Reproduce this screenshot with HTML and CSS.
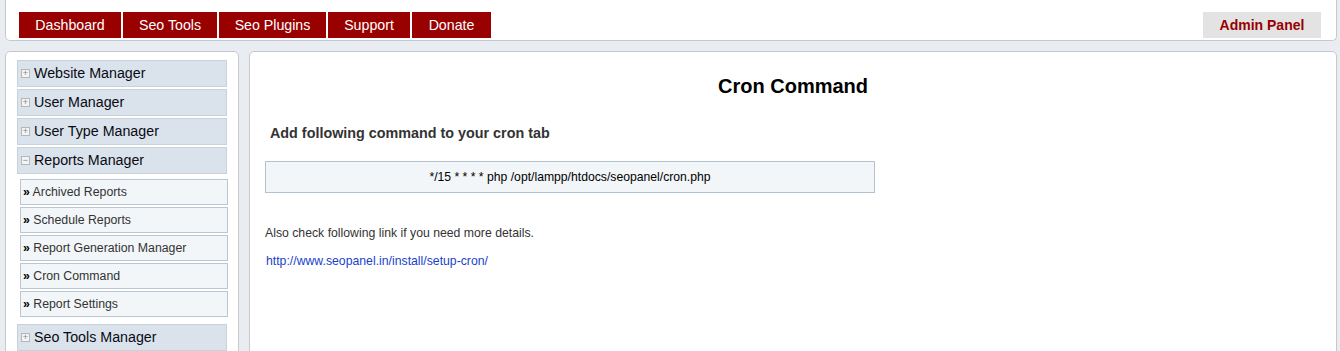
FILE: index.html
```html
<!DOCTYPE html>
<html lang="en">
<head>
    <meta charset="UTF-8">
    <meta name="viewport" content="width=device-width, initial-scale=1.0">
    <title>Cron Command</title>
    <link rel="stylesheet" href="styles.css">
</head>
<body>
    <div class="header">
        <div class="tabs">
            <a class="tab tab-dash" href="#">Dashboard</a>
            <a class="tab tab-tools" href="#">Seo Tools</a>
            <a class="tab tab-plugins" href="#">Seo Plugins</a>
            <a class="tab tab-support" href="#">Support</a>
            <a class="tab tab-donate" href="#">Donate</a>
        </div>
        <a class="admin" href="#">Admin Panel</a>
    </div>

    <div class="main">
        <div class="sidebar">
            <div class="menu-head"><span class="toggle">+</span>Website Manager</div>
            <div class="menu-head"><span class="toggle">+</span>User Manager</div>
            <div class="menu-head"><span class="toggle">+</span>User Type Manager</div>
            <div class="menu-head"><span class="toggle">&minus;</span>Reports Manager</div>
            <div class="submenu">
                <a class="sub-item" href="#"><b>&raquo;</b> Archived Reports</a>
                <a class="sub-item" href="#"><b>&raquo;</b> Schedule Reports</a>
                <a class="sub-item" href="#"><b>&raquo;</b> Report Generation Manager</a>
                <a class="sub-item" href="#"><b>&raquo;</b> Cron Command</a>
                <a class="sub-item" href="#"><b>&raquo;</b> Report Settings</a>
            </div>
            <div class="menu-head"><span class="toggle">+</span>Seo Tools Manager</div>
        </div>

        <div class="content">
            <h1>Cron Command</h1>
            <h3>Add following command to your cron tab</h3>
            <div class="command">*/15 * * * * php /opt/lampp/htdocs/seopanel/cron.php</div>
            <p class="note">Also check following link if you need more details.</p>
            <a class="link" href="#">http://www.seopanel.in/install/setup-cron/</a>
        </div>
    </div>
</body>
</html>
```

FILE: styles.css
```css
* {
    margin: 0;
    padding: 0;
    box-sizing: border-box;
    font-family: 'Liberation Sans', Arial, sans-serif;
}

body {
    background: #e9edf1;
    height: 351px;
    overflow: hidden;
}

a {
    text-decoration: none;
}

.header {
    height: 41px;
    margin: 0 3px 0 5px;
    padding: 12px 15px 0 13px;
    background: white;
    border: 1px solid #c5c9ce;
    border-top: none;
    border-radius: 0 0 5px 5px;
    display: flex;
    justify-content: space-between;
}

.tabs {
    display: flex;
    gap: 2px;
}

.tab {
    height: 26px;
    background: #990000;
    color: white;
    font-size: 14.2px;
    line-height: 26px;
    text-align: center;
}

.tab-dash { width: 102px; }
.tab-tools { width: 94px; }
.tab-plugins { width: 107px; }
.tab-support { width: 82px; }
.tab-donate { width: 79px; }

.admin {
    height: 26px;
    width: 118px;
    background: #e3e3e3;
    color: #990000;
    font-size: 14px;
    font-weight: bold;
    line-height: 26px;
    text-align: center;
}

.main {
    display: flex;
    gap: 10px;
    margin: 10px 3px 0 5px;
}

.sidebar {
    width: 234px;
    height: 320px;
    flex-shrink: 0;
    padding: 8px 0 0 11px;
    background: white;
    border: 1px solid #c5c9ce;
    border-radius: 5px 5px 0 0;
}

.menu-head {
    width: 210px;
    height: 27px;
    margin-bottom: 2px;
    background: #dae3eb;
    border: 1px solid #c9d2da;
    color: #0a0a14;
    font-size: 14.25px;
    line-height: 25px;
    display: flex;
    align-items: center;
}

.toggle {
    width: 9px;
    height: 9px;
    margin: 0 4px 0 3px;
    border: 1px solid #b6b6b6;
    background: #f4f4f4;
    color: #8a8a8a;
    font-size: 9px;
    line-height: 7px;
    text-align: center;
}

.submenu {
    width: 212px;
    padding: 3px 0 5px 3px;
    margin-bottom: 2px;
    display: flex;
    flex-direction: column;
    gap: 2px;
}

.sub-item {
    height: 26px;
    width: 208px;
    padding-left: 2px;
    background: #f2f6f9;
    border: 1px solid #bac7d2;
    color: #333;
    font-size: 12.3px;
    line-height: 24px;
}

.sub-item b {
    color: #000;
}

.content {
    flex: 1;
    height: 320px;
    padding: 22px 15px 0;
    background: white;
    border: 1px solid #c5c9ce;
    border-radius: 5px 5px 0 0;
}

h1 {
    font-size: 20px;
    line-height: 24px;
    text-align: center;
    color: #000;
}

h3 {
    margin-top: 27px;
    padding-left: 5px;
    font-size: 14.35px;
    line-height: 17px;
    color: #333;
}

.command {
    width: 610px;
    height: 32px;
    margin-top: 19px;
    background: #f2f6f9;
    border: 1px solid #b2c2ce;
    font-size: 12.2px;
    line-height: 30px;
    text-align: center;
    color: #000;
}

.note {
    margin-top: 33px;
    font-size: 12.25px;
    line-height: 14px;
    color: #333;
}

.link {
    display: block;
    margin-top: 14px;
    padding-left: 1px;
    font-size: 12.25px;
    line-height: 14px;
    color: #1a3fcc;
}
```
